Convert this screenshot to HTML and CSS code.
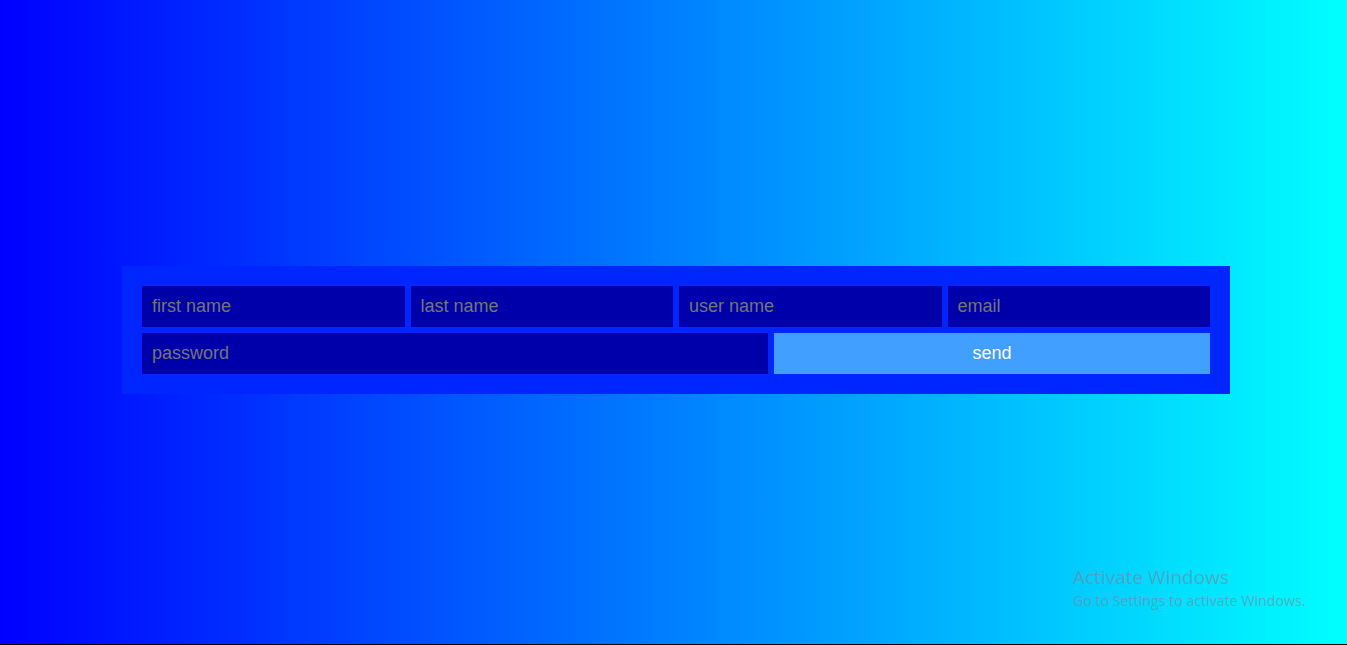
FILE: index.html
```html
<!DOCTYPE html>
<html>
<head>
<meta charset="utf-8">
<link rel="stylesheet" href="styles.css">
</head>
<body>
<main class="page">
  <form class="card">
    <div class="row row-four">
      <input class="field" type="text" placeholder="first name">
      <input class="field" type="text" placeholder="last name">
      <input class="field" type="text" placeholder="user name">
      <input class="field" type="email" placeholder="email">
    </div>
    <div class="row row-two">
      <input class="field" type="password" placeholder="password">
      <button class="send" type="button">send</button>
    </div>
  </form>
  <div class="watermark">
    <div class="wm-title">Activate Windows</div>
    <div class="wm-sub">Go to Settings to activate Windows.</div>
  </div>
</main>
</body>
</html>
```
FILE: styles.css
```css
html {
  background: #000;
}
body {
  margin: 0;
  font-family: "Liberation Sans", Arial, sans-serif;
}
.page {
  position: relative;
  height: 644px;
  background: linear-gradient(to right, #0000ff 0%, #00ffff 100%);
  display: flex;
  align-items: center;
  justify-content: center;
  padding-left: 5px;
  box-sizing: border-box;
}
.card {
  width: 1108px;
  box-sizing: border-box;
  padding: 20px;
  background: #0026ff;
  display: flex;
  flex-direction: column;
  gap: 6px;
  margin-top: 16px;
}
.row {
  display: grid;
  gap: 6px;
  height: 41px;
}
.row-four {
  grid-template-columns: repeat(4, 1fr);
}
.row-two {
  grid-template-columns: 626fr 436fr;
}
.field {
  border: none;
  outline: none;
  background: #0000aa;
  padding: 0 10px;
  font-family: "Liberation Sans", Arial, sans-serif;
  font-size: 18px;
  color: #fff;
  min-width: 0;
}
.field::placeholder {
  color: #757575;
}
.send {
  border: none;
  background: #409fff;
  color: #fff;
  font-family: "Liberation Sans", Arial, sans-serif;
  font-size: 18px;
  cursor: pointer;
}
.watermark {
  position: absolute;
  left: 1073px;
  top: 568px;
  color: rgba(130, 130, 150, 0.6);
  font-family: "Open Sans", "Noto Sans", sans-serif;
  line-height: 1;
}
.wm-title {
  font-size: 19px;
  margin-bottom: 7px;
}
.wm-sub {
  font-size: 14.2px;
}
```
